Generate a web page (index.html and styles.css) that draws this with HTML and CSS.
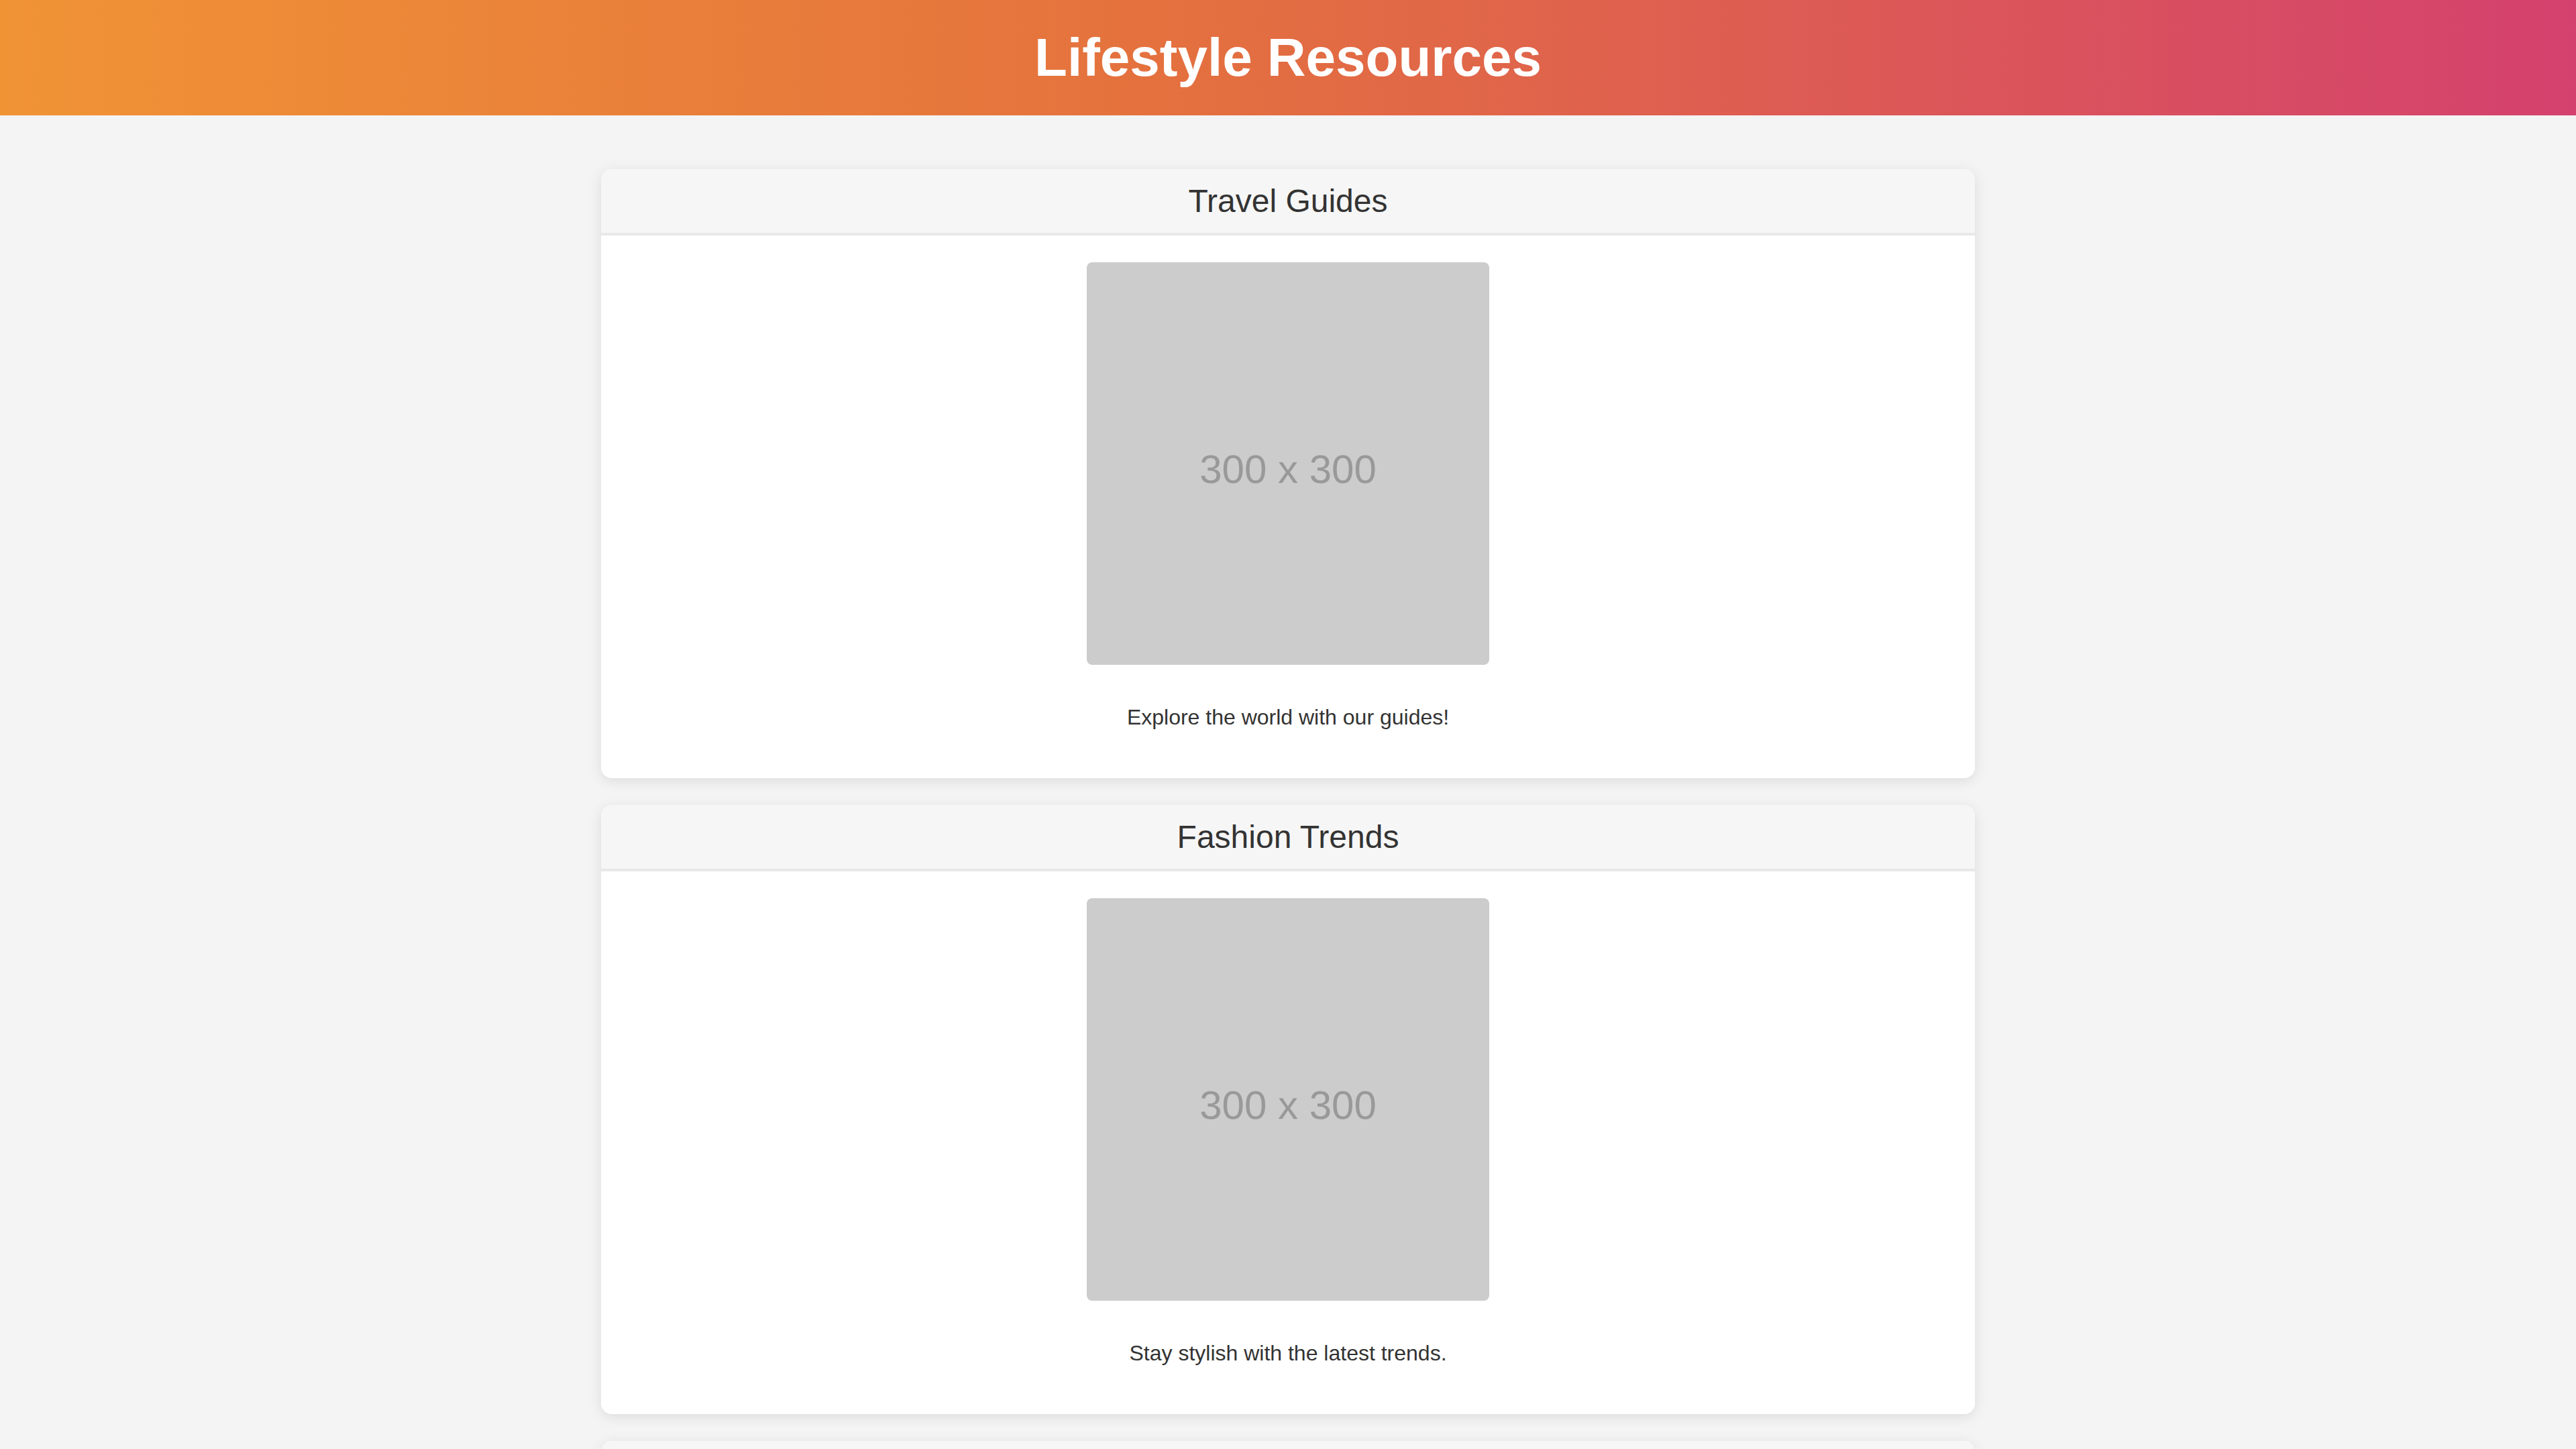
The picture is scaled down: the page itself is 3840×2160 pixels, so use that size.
FILE: index.html
```html
<!DOCTYPE html>
<html lang="en">
<head>
<meta charset="utf-8">
<title>Lifestyle Resources</title>
<link rel="stylesheet" href="styles.css">
</head>
<body>
<header class="site-header">
  <h1 class="site-title">Lifestyle Resources</h1>
</header>
<main class="container">
  <section class="card">
    <div class="card-header"><h2 class="card-title">Travel Guides</h2></div>
    <div class="card-body">
      <div class="placeholder">300 x 300</div>
      <p class="card-text">Explore the world with our guides!</p>
    </div>
  </section>
  <section class="card">
    <div class="card-header"><h2 class="card-title">Fashion Trends</h2></div>
    <div class="card-body">
      <div class="placeholder">300 x 300</div>
      <p class="card-text">Stay stylish with the latest trends.</p>
    </div>
  </section>
  <section class="card">
    <div class="card-header"><h2 class="card-title">Healthy Living</h2></div>
    <div class="card-body">
      <div class="placeholder">300 x 300</div>
      <p class="card-text">Tips for a healthier, happier you.</p>
    </div>
  </section>
</main>
</body>
</html>
```

FILE: styles.css
```css
html, body {
  margin: 0;
  padding: 0;
}
body {
  background: #f4f4f4;
  font-family: "Liberation Sans", Arial, sans-serif;
  color: #333333;
}
.site-header {
  background: linear-gradient(to right, #f09335 0%, #e4713e 45%, #d4416e 100%);
  padding: 40px 0;
  text-align: center;
}
.site-title {
  margin: 0;
  font-size: 80px;
  font-weight: bold;
  color: #ffffff;
  line-height: normal;
}
.container {
  max-width: 2048px;
  margin: 80px auto 0;
  display: flex;
  flex-direction: column;
  gap: 40px;
}
.card {
  background: #ffffff;
  border-radius: 16px;
  box-shadow: 0 4px 20px rgba(0, 0, 0, 0.1);
  overflow: hidden;
}
.card-header {
  background: #f6f6f6;
  border-bottom: 4px solid #e8e8e8;
  padding: 20px;
  text-align: center;
}
.card-title {
  margin: 0;
  font-size: 48px;
  font-weight: normal;
  line-height: normal;
  color: #333333;
}
.card-body {
  padding: 40px;
  display: flex;
  flex-direction: column;
  align-items: center;
}
.placeholder {
  box-sizing: border-box;
  width: 600px;
  height: 600px;
  padding-top: 16px;
  background: #cccccc;
  border-radius: 8px;
  color: #999999;
  font-size: 60px;
  display: flex;
  align-items: center;
  justify-content: center;
  margin-bottom: 28px;
}
.card-text {
  margin: 32px 0;
  font-size: 32px;
  line-height: normal;
  color: #333333;
}
```
